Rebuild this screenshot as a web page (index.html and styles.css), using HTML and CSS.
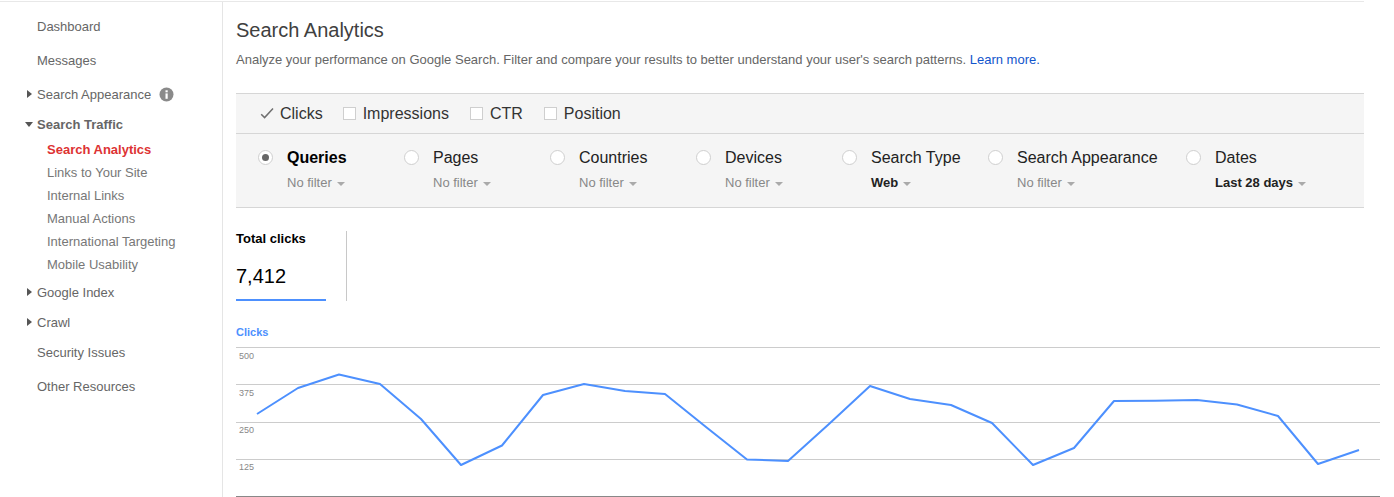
FILE: index.html
```html
<!DOCTYPE html>
<html>
<head>
  <title>Search Analytics</title>
  <meta charset="utf-8">
  <link rel="stylesheet" href="styles.css">
</head>
<body>
  <div id="page">
    <div id="sidebar">
      <a href="#" class="nav-item">Dashboard</a>
      <a href="#" class="nav-item">Messages</a>
      <a href="#" class="nav-item"><span class="tri-right"></span>Search Appearance
        <svg class="info" width="15" height="15" viewBox="0 0 15 15"><circle cx="7.5" cy="7.5" r="7" fill="#8a8a8a"/><rect x="6.5" y="6.4" width="2.2" height="5.4" fill="#fff"/><rect x="6.5" y="3.3" width="2.2" height="2" fill="#fff"/></svg>
      </a>
      <a href="#" class="nav-item nav-traffic"><span class="tri-down"></span>Search Traffic</a>
      <div class="subnav">
        <a href="#" class="on">Search Analytics</a>
        <a href="#">Links to Your Site</a>
        <a href="#">Internal Links</a>
        <a href="#">Manual Actions</a>
        <a href="#">International Targeting</a>
        <a href="#">Mobile Usability</a>
      </div>
      <a href="#" class="nav-item nav-tree"><span class="tri-right"></span>Google Index</a>
      <a href="#" class="nav-item nav-tree"><span class="tri-right"></span>Crawl</a>
      <a href="#" class="nav-item nav-tree">Security Issues</a>
      <a href="#" class="nav-item nav-other">Other Resources</a>
    </div>

    <div id="main">
      <h1>Search Analytics</h1>
      <p class="intro">Analyze your performance on Google Search. Filter and compare your results to better understand your user's search patterns. <a href="#">Learn more.</a></p>

      <div id="panel">
        <div class="metrics">
          <label class="metric metric-on">
            <svg class="check" width="14" height="13" viewBox="0 0 14 13"><path d="M1.2 7.2 L4.6 10.6 L13 1.4" fill="none" stroke="#6f6f6f" stroke-width="1.5"/></svg>Clicks
          </label>
          <label class="metric"><span class="box"></span>Impressions</label>
          <label class="metric"><span class="box"></span>CTR</label>
          <label class="metric"><span class="box"></span>Position</label>
        </div>
        <div class="filters">
          <div class="filter">
            <span class="radio radio-on"></span>
            <div class="filter-text"><div class="filter-name selected">Queries</div><div class="filter-value">No filter<span class="caret"></span></div></div>
          </div>
          <div class="filter">
            <span class="radio"></span>
            <div class="filter-text"><div class="filter-name">Pages</div><div class="filter-value">No filter<span class="caret"></span></div></div>
          </div>
          <div class="filter">
            <span class="radio"></span>
            <div class="filter-text"><div class="filter-name">Countries</div><div class="filter-value">No filter<span class="caret"></span></div></div>
          </div>
          <div class="filter">
            <span class="radio"></span>
            <div class="filter-text"><div class="filter-name">Devices</div><div class="filter-value">No filter<span class="caret"></span></div></div>
          </div>
          <div class="filter">
            <span class="radio"></span>
            <div class="filter-text"><div class="filter-name">Search Type</div><div class="filter-value set">Web<span class="caret"></span></div></div>
          </div>
          <div class="filter">
            <span class="radio"></span>
            <div class="filter-text filter-wide"><div class="filter-name">Search Appearance</div><div class="filter-value">No filter<span class="caret"></span></div></div>
          </div>
          <div class="filter">
            <span class="radio"></span>
            <div class="filter-text"><div class="filter-name">Dates</div><div class="filter-value set">Last 28 days<span class="caret"></span></div></div>
          </div>
        </div>
      </div>

      <div class="scorecard">
        <div class="score">
          <div class="score-label">Total clicks</div>
          <div class="score-num">7,412</div>
        </div>
      </div>

      <div class="chart-title">Clicks</div>
      <svg class="chart" width="1144" height="150" viewBox="236 347 1144 150">
        <g class="grid">
          <line x1="236" x2="1380" y1="347.5" y2="347.5"/>
          <line x1="236" x2="1380" y1="384.5" y2="384.5"/>
          <line x1="236" x2="1380" y1="422.5" y2="422.5"/>
          <line x1="236" x2="1380" y1="459.5" y2="459.5"/>
          <line class="axis" x1="236" x2="1380" y1="496.5" y2="496.5"/>
        </g>
        <g class="ticks">
          <text x="239" y="359">500</text>
          <text x="239" y="396">375</text>
          <text x="239" y="433">250</text>
          <text x="239" y="470">125</text>
        </g>
        <polyline class="line" points="257,414 298,388 339,374.5 380,384 421,419 461,465 502,445.5 543,395 584,384 625,391 665,394 706,427 747,459.5 788,461 829,424 870,386 910,399 951,405 992,423 1033,465 1074,448 1114,401 1155,400.7 1197,400 1237,404.5 1278,416 1318,464 1359,450"/>
      </svg>
    </div>
  </div>
</body>
</html>
```

FILE: styles.css
```css
*{
  padding:0;
  margin:0;
  box-sizing:border-box;
}
html,body{
  height:497px;
  overflow:hidden;
  background:#fff;
}
body{
  font-family:"Liberation Sans",Arial,sans-serif;
  font-size:13px;
  color:#333;
  padding-top:1px;
}
a{
  text-decoration:none;
}
#page{
  display:flex;
  width:1364px;
  height:496px;
  border-top:1px solid #e8e8e8;
}
#sidebar{
  width:223px;
  flex:none;
  border-right:1px solid #e5e5e5;
  padding-top:7px;
}
.nav-item{
  display:flex;
  align-items:center;
  height:34px;
  padding-left:37px;
  position:relative;
  color:#666;
}
.nav-traffic{
  height:26px;
  font-weight:bold;
  color:#666;
}
.nav-tree{
  height:30px;
}
.nav-other{
  margin-top:2px;
}
.info{
  margin-left:8px;
}
.tri-right{
  position:absolute;
  left:27px;
  top:50%;
  margin-top:-4px;
  border-left:5px solid #555;
  border-top:4px solid transparent;
  border-bottom:4px solid transparent;
}
.tri-down{
  position:absolute;
  left:25px;
  top:50%;
  margin-top:-2px;
  border-top:5px solid #555;
  border-left:4px solid transparent;
  border-right:4px solid transparent;
}
.subnav{
  padding-top:1px;
  padding-bottom:1px;
}
.subnav a{
  display:block;
  height:23px;
  line-height:23px;
  padding-left:47px;
  color:#777;
}
.subnav .on{
  color:#dd3333;
  font-weight:bold;
}
#main{
  flex:1;
  padding-left:13px;
  min-width:0;
}
h1{
  font-size:20px;
  font-weight:normal;
  line-height:24px;
  color:#404040;
  margin-top:16px;
}
.intro{
  line-height:16px;
  margin-top:10px;
  color:#666;
}
.intro a{
  color:#1155cc;
}
#panel{
  width:1128px;
  margin-top:25px;
  background:#f5f5f5;
  border-top:1px solid #d6d6d6;
  border-bottom:1px solid #d6d6d6;
}
.metrics{
  display:flex;
  height:40px;
  align-items:center;
  padding-left:24px;
  border-bottom:1px solid #d6d6d6;
  gap:21px;
  font-size:16px;
  color:#333;
}
.metric{
  display:flex;
  align-items:center;
}
.metric-on{
  margin-right:-1px;
}
.check{
  margin-right:6px;
}
.box{
  width:13px;
  height:13px;
  background:#fff;
  border:1px solid #cfcfcf;
  margin-right:7px;
}
.filters{
  display:flex;
  padding:13px 0 0 22px;
  height:73px;
}
.filter{
  display:flex;
  padding-right:28px;
}
.radio{
  width:15px;
  height:15px;
  border-radius:50%;
  background:#fff;
  border:1px solid #cfcfcf;
  margin-right:14px;
  margin-top:3px;
  flex:none;
  display:flex;
  align-items:center;
  justify-content:center;
}
.radio-on:after{
  content:"";
  width:7px;
  height:7px;
  border-radius:50%;
  background:#666;
}
.filter-text{
  width:89px;
  white-space:nowrap;
}
.filter-wide{
  width:141px;
}
.filter-name{
  font-size:16px;
  line-height:21px;
  color:#222;
}
.filter-name.selected{
  font-weight:bold;
  color:#000;
}
.filter-value{
  font-size:13px;
  line-height:16px;
  margin-top:7px;
  color:#888;
}
.filter-value.set{
  font-weight:bold;
  color:#222;
}
.caret{
  display:inline-block;
  vertical-align:middle;
  margin-left:5px;
  border-top:4px solid #aaa;
  border-left:4px solid transparent;
  border-right:4px solid transparent;
}
.scorecard{
  margin-top:23px;
  height:70px;
  width:111px;
  border-right:1px solid #c8c8c8;
}
.score{
  width:90px;
  height:70px;
  border-bottom:2px solid #4d90fe;
}
.score-label{
  font-size:13px;
  font-weight:bold;
  color:#000;
  line-height:16px;
}
.score-num{
  font-size:20px;
  line-height:24px;
  color:#000;
  margin-top:17px;
}
.chart-title{
  font-size:11px;
  font-weight:bold;
  color:#4d90fe;
  line-height:14px;
  margin-top:24px;
}
.chart{
  display:block;
  margin-top:8px;
}
.grid line{
  stroke:#cccccc;
  stroke-width:1;
}
.grid .axis{
  stroke:#888;
}
.ticks text{
  font-family:"Liberation Sans",Arial,sans-serif;
  font-size:9px;
  fill:#888;
}
.line{
  fill:none;
  stroke:#4d90fe;
  stroke-width:2;
  stroke-linejoin:round;
}
```
